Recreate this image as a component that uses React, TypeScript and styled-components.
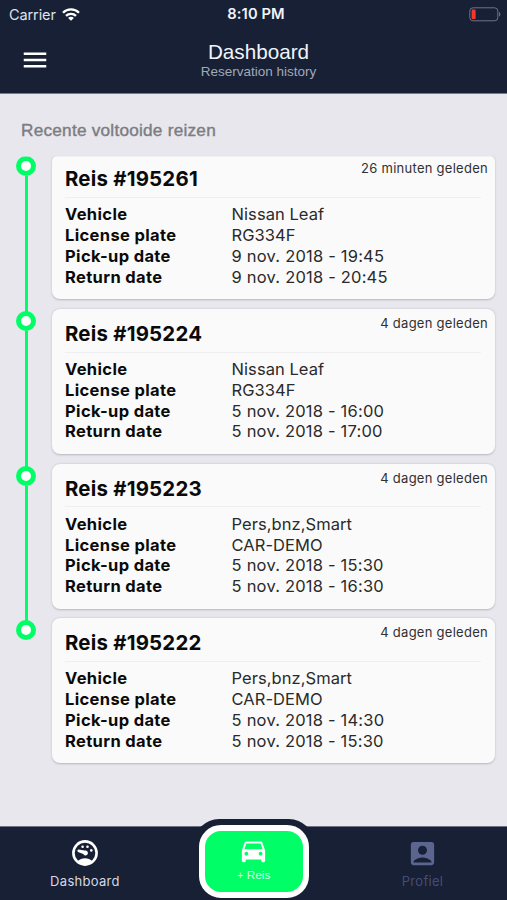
import React from 'react';
import styled, { createGlobalStyle } from 'styled-components';
import { MdAccountBox, MdDirectionsCar, MdMenu } from 'react-icons/md';

const NAVY = '#172035';
const GREEN = '#00ff66';
const UI = "Inter, 'Liberation Sans', sans-serif";
const HELV = "'Liberation Sans', Arial, sans-serif";

const GlobalStyle = createGlobalStyle`
  * { box-sizing: border-box; }
  body { margin: 0; background: #e8e7ed; overflow: hidden; }
`;

const Screen = styled.div`
  width: 507px;
  height: 900px;
  display: flex;
  flex-direction: column;
  background: #e8e7ed;
  font-family: ${UI};
  overflow: hidden;
`;

const Top = styled.header`
  flex: none;
  height: 94px;
  background: ${NAVY};
  border-bottom: 1px solid #777b88;
  color: #f1f3fa;
`;

const StatusBar = styled.div`
  height: 27px;
  display: grid;
  grid-template-columns: 1fr auto 1fr;
  align-items: center;
  padding: 0 6px 0 9px;
`;

const Carrier = styled.div`
  display: flex;
  align-items: center;
  gap: 6px;
  font-size: 14.5px;
  line-height: 27px;
  letter-spacing: -0.1px;
  color: #dfe2ec;
`;

const Clock = styled.div`
  font-size: 14.7px;
  font-weight: 600;
  line-height: 27px;
  letter-spacing: 0.1px;
  padding: 1px 0 0 2px;
`;

const BatterySvg = styled.svg`
  justify-self: end;
`;

const TitleBar = styled.div`
  height: 66px;
  display: grid;
  grid-template-columns: 70px 1fr 60px;
`;

const MenuButton = styled.button`
  border: 0;
  padding: 18px 0 0 20px;
  background: none;
  color: #fff;
  height: 50px;
  display: flex;
  align-items: flex-start;
`;

const Titles = styled.div`
  display: flex;
  flex-direction: column;
  align-items: center;
  font-family: ${HELV};
  padding: 13px 0 0;
`;

const Title = styled.h1`
  margin: 0;
  font-size: 20.7px;
  font-weight: 400;
  line-height: 24px;
`;

const Subtitle = styled.div`
  font-size: 13.5px;
  line-height: 16px;
  color: #a3a8b6;
`;

const Content = styled.main`
  flex: 1;
  padding: 26px 12px 0 16px;
`;

const SectionTitle = styled.h2`
  margin: 0 0 15.4px 5px;
  font-family: ${HELV};
  font-size: 17.2px;
  font-weight: 400;
  line-height: 21px;
  letter-spacing: 0.24px;
  color: #7c7c82;
  -webkit-text-stroke: 0.4px #7c7c82;
`;

const TripList = styled.div`
  clip-path: inset(0 -10px);
`;

const Entry = styled.div`
  display: flex;
  height: 154.7px;
`;

const Rail = styled.div`
  width: 20px;
  margin-right: 16px;
  display: flex;
  flex-direction: column;
  align-items: center;
`;

const Dot = styled.div`
  flex: none;
  width: 20px;
  height: 20px;
  border-radius: 50%;
  border: 5px solid ${GREEN};
  background: #fff;
`;

const Line = styled.div`
  flex: 1;
  width: 3px;
  margin-bottom: -1px;
  background: ${GREEN};
`;

const Card = styled.article`
  flex: 1;
  height: 145px;
  margin-top: -2px;
  background: #fafafa;
  border-radius: 8px;
  box-shadow: 0 0.5px 2px rgba(40, 40, 60, 0.25);
  padding: 0 13px;
`;

const CardHead = styled.div`
  height: 43.5px;
  display: flex;
  justify-content: space-between;
  border-bottom: 1px solid #efeff1;
  margin-bottom: 6.5px;
  margin-right: 1px;
`;

const TripName = styled.h3`
  margin: 0;
  font-size: 20.4px;
  font-weight: 700;
  line-height: 50px;
  letter-spacing: 0.22px;
  color: #0a0a0a;
`;

const Age = styled.span`
  margin-right: -7px;
  font-size: 13px;
  line-height: 29px;
  letter-spacing: 0.27px;
  color: #303030;
`;

const Row = styled.div`
  display: grid;
  grid-template-columns: 166.6px 1fr;
  font-size: 16.5px;
  line-height: 20.8px;
  color: #2a2a2a;
`;

const Label = styled.span`
  font-weight: 700;
  letter-spacing: 0.36px;
  color: #0a0a0a;
`;

const Value = styled.span<{ $date?: boolean }>`
  letter-spacing: ${(p) => (p.$date ? '0.2px' : '0.05px')};
`;

const TabBar = styled.nav`
  flex: none;
  height: 74px;
  display: grid;
  grid-template-columns: 170px 168px 169px;
  background: ${NAVY};
  border-top: 1px solid #6c7080;
`;

const Tab = styled.div`
  display: flex;
  flex-direction: column;
  align-items: center;
  color: #5c6590;
`;

const TabIcon = styled.div<{ $active?: boolean }>`
  height: 31px;
  margin-top: 10.5px;
  display: flex;
  align-items: center;
  color: ${(p) => (p.$active ? '#ffffff' : '#5c6590')};
`;

const TabLabel = styled.span<{ $active?: boolean }>`
  margin-top: 4.5px;
  font-size: 13px;
  line-height: 16px;
  letter-spacing: 0.3px;
  color: ${(p) => (p.$active ? '#d5d8e4' : '#464e73')};
`;

const CenterTab = styled.div`
  display: flex;
  justify-content: center;
  align-items: flex-start;
`;

const Halo = styled.div`
  flex: none;
  width: 120px;
  height: 85px;
  margin-top: -8px;
  margin-left: -1px;
  padding: 5.5px 5px;
  border-radius: 25px;
  background: ${NAVY};
`;

const TripButton = styled.button`
  width: 110px;
  height: 73.5px;
  border: 6.5px solid #fff;
  border-radius: 22px;
  padding: 4px 0 0;
  background: ${GREEN};
  color: #fff;
  display: flex;
  flex-direction: column;
  align-items: center;
`;

const TripLabel = styled.span`
  margin-top: 2.5px;
  font-family: ${HELV};
  font-size: 11.7px;
  line-height: 14px;
  color: #d5ffe5;
`;

const WifiIcon = () => (
  <svg width="18" height="13" viewBox="0 0 18 13" fill="none" stroke="#fff" strokeWidth="2.3">
    <path d="M1 4.7a11.3 11.3 0 0 1 16 0" />
    <path d="M4 7.9a7 7 0 0 1 10 0" />
    <path d="M9 12.8 6.1 10a4 4 0 0 1 5.8 0Z" fill="#fff" stroke="none" />
  </svg>
);

const BatteryIcon = () => (
  <BatterySvg width="32" height="15" viewBox="0 0 32 15">
    <rect x="0.8" y="0.8" width="28" height="13" rx="3.2" fill="none" stroke="#6f7484" />
    <rect x="2.6" y="2.5" width="4" height="9.6" rx="1.2" fill="#f5362c" />
    <path d="M30 5v4.6c1.8-.7 1.8-3.9 0-4.6Z" fill="#6f7484" />
  </BatterySvg>
);

const GaugeIcon = () => (
  <svg width="26" height="26" viewBox="0 0 26 26" fill="currentColor">
    <circle cx="13" cy="13" r="11.6" fill="none" stroke="currentColor" strokeWidth="2.6" />
    <path d="M5.6 21.2C9.4 17.3 16.6 17.3 20.4 21.2 16.5 25.3 9.5 25.3 5.6 21.2Z" />
    <path d="M6.6 9.6 12.6 10.6A2.5 2.5 0 1 1 11.2 14.1L6 11.9C4.9 11.2 5.4 9.5 6.6 9.6Z" />
    <circle cx="10.6" cy="6.8" r="1.3" />
    <circle cx="15.5" cy="6.8" r="1.3" />
    <circle cx="19.3" cy="10.4" r="1.3" />
  </svg>
);

const trips = [
  { id: '195261', age: '26 minuten geleden', car: 'Nissan Leaf', plate: 'RG334F', from: '9 nov. 2018 - 19:45', to: '9 nov. 2018 - 20:45' },
  { id: '195224', age: '4 dagen geleden', car: 'Nissan Leaf', plate: 'RG334F', from: '5 nov. 2018 - 16:00', to: '5 nov. 2018 - 17:00' },
  { id: '195223', age: '4 dagen geleden', car: 'Pers,bnz,Smart', plate: 'CAR-DEMO', from: '5 nov. 2018 - 15:30', to: '5 nov. 2018 - 16:30' },
  { id: '195222', age: '4 dagen geleden', car: 'Pers,bnz,Smart', plate: 'CAR-DEMO', from: '5 nov. 2018 - 14:30', to: '5 nov. 2018 - 15:30' },
];

export default function App() {
  return (
    <Screen>
      <GlobalStyle />
      <Top>
        <StatusBar>
          <Carrier>Carrier <WifiIcon /></Carrier>
          <Clock>8:10 PM</Clock>
          <BatteryIcon />
        </StatusBar>
        <TitleBar>
          <MenuButton aria-label="Menu"><MdMenu size={30} /></MenuButton>
          <Titles>
            <Title>Dashboard</Title>
            <Subtitle>Reservation history</Subtitle>
          </Titles>
        </TitleBar>
      </Top>
      <Content>
        <SectionTitle>Recente voltooide reizen</SectionTitle>
        <TripList>
          {trips.map((t, i) => (
            <Entry key={t.id}>
              <Rail>
                <Dot />
                {i < trips.length - 1 && <Line />}
              </Rail>
              <Card>
                <CardHead>
                  <TripName>Reis #{t.id}</TripName>
                  <Age>{t.age}</Age>
                </CardHead>
                <Row><Label>Vehicle</Label><Value>{t.car}</Value></Row>
                <Row><Label>License plate</Label><Value>{t.plate}</Value></Row>
                <Row><Label>Pick-up date</Label><Value $date>{t.from}</Value></Row>
                <Row><Label>Return date</Label><Value $date>{t.to}</Value></Row>
              </Card>
            </Entry>
          ))}
        </TripList>
      </Content>
      <TabBar>
        <Tab>
          <TabIcon $active><GaugeIcon /></TabIcon>
          <TabLabel $active>Dashboard</TabLabel>
        </Tab>
        <CenterTab>
          <Halo>
            <TripButton>
              <MdDirectionsCar size={31} />
              <TripLabel>+ Reis</TripLabel>
            </TripButton>
          </Halo>
        </CenterTab>
        <Tab>
          <TabIcon><MdAccountBox size={31} /></TabIcon>
          <TabLabel>Profiel</TabLabel>
        </Tab>
      </TabBar>
    </Screen>
  );
}
